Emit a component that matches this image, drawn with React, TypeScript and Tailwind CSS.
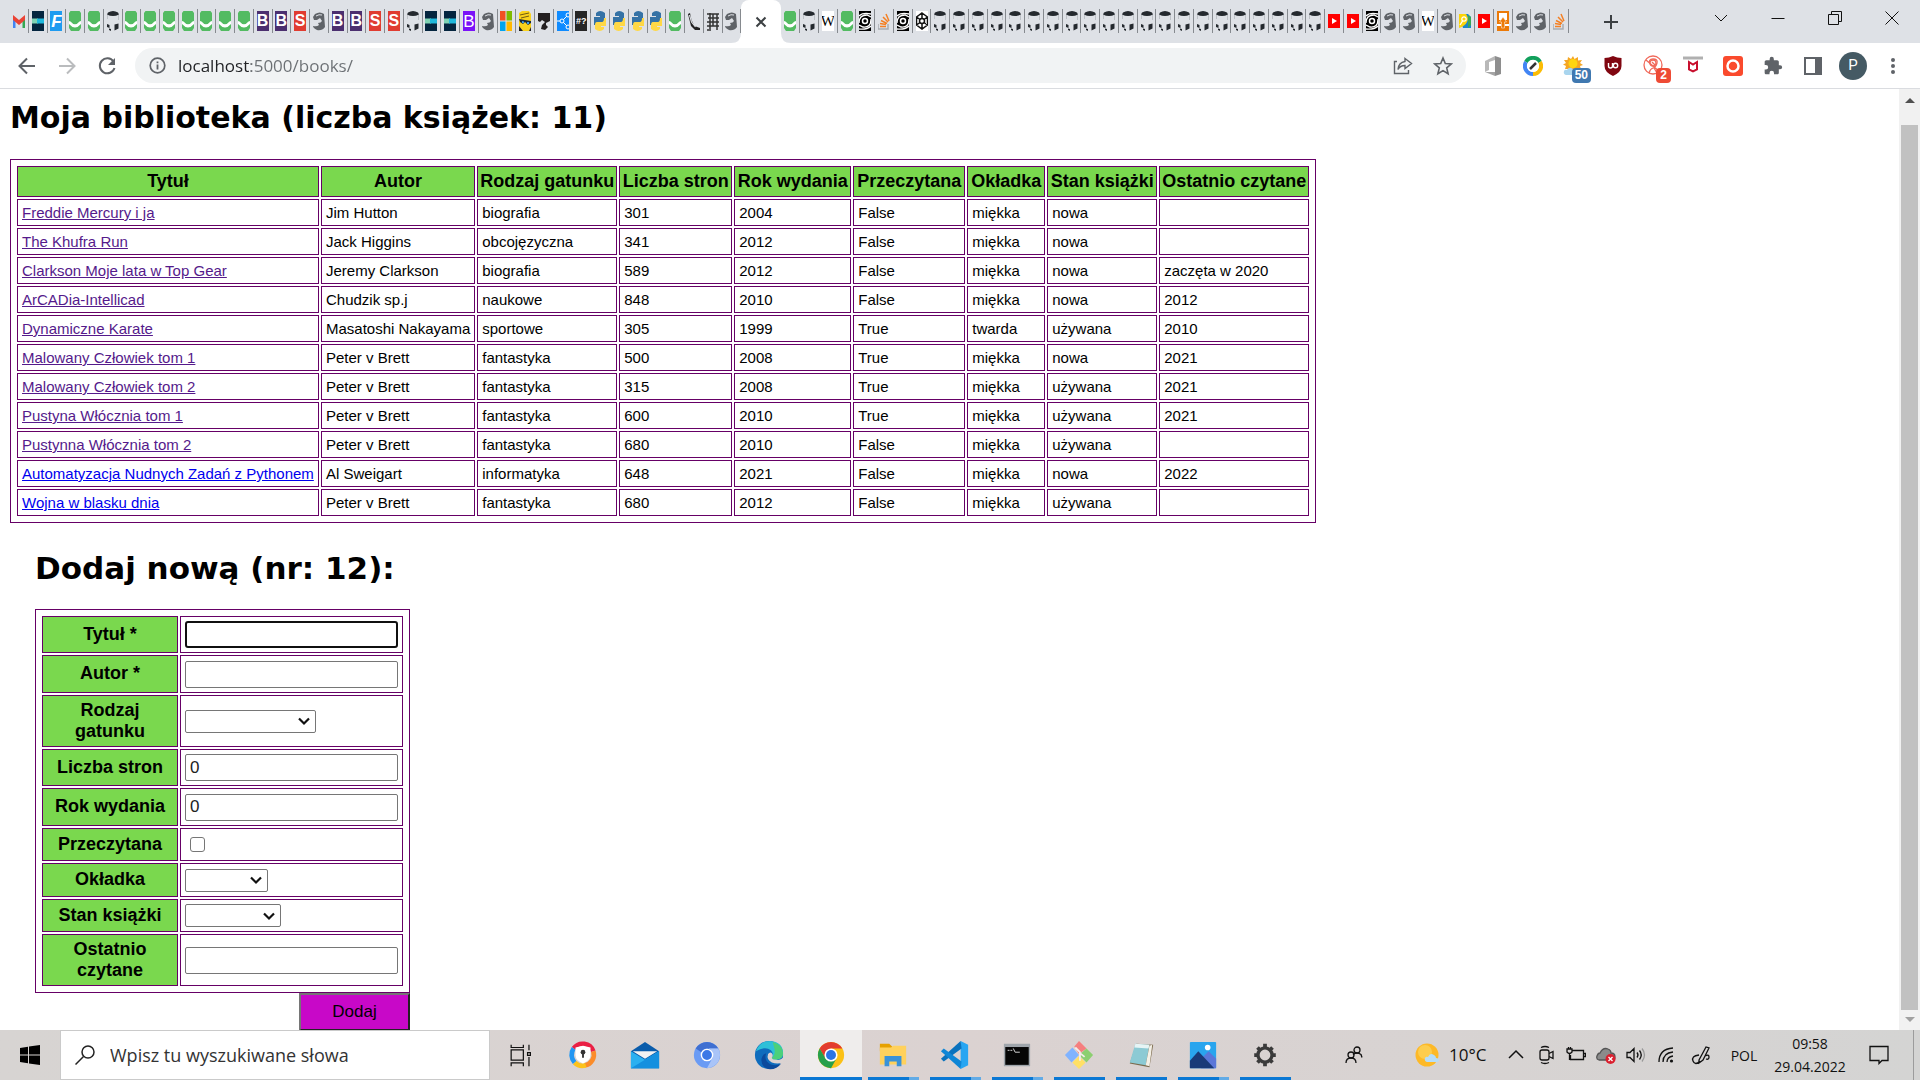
import React from "react";

type Fav =
  | "gmail" | "navy" | "f" | "green" | "gh" | "b" | "s" | "globe" | "bv" | "ms" | "face" | "blob"
  | "share" | "hash" | "py" | "line" | "grid" | "w" | "spiral" | "so" | "hex" | "yt" | "find" | "up";

const rep = (f: Fav, n: number): Fav[] => Array.from({ length: n }, () => f);

const LEFT: Fav[] = [
  "gmail", "navy", "f", "green", "green", "gh", ...rep("green", 7), "b", "b", "s", "globe", "b", "b", "s", "s",
  "gh", "navy", "navy", "bv", "globe", "ms", "face", "blob", "share", "hash", ...rep("py", 4), "green", "line",
  "grid", "globe",
];
const RIGHT: Fav[] = [
  "green", "gh", "w", "green", "spiral", "so", "spiral", "hex", ...rep("gh", 21), "yt", "yt", "spiral", "globe",
  "globe", "w", "globe", "find", "yt", "up", "globe", "globe", "so",
];

function Favicon({ kind }: { kind: Fav }) {
  const letter = "flex h-5 w-3 items-center justify-center overflow-hidden font-['Liberation_Sans'] leading-none text-white";
  switch (kind) {
    case "f":
      return <span className={`${letter} bg-[#1e9bf0] text-[17px] font-bold italic`}>F</span>;
    case "b":
      return <span className={`${letter} bg-[#4b2f6f] text-[16px] font-bold`}>B</span>;
    case "s":
      return <span className={`${letter} bg-[#e03c31] text-[16px] font-bold`}>S</span>;
    case "bv":
      return <span className={`${letter} bg-[#7a12f8] text-[17px]`}>B</span>;
    case "hash":
      return <span className={`${letter} bg-[#262626] text-[9px] font-bold`}>#?</span>;
    case "w":
      return (
        <span className="flex h-5 w-3 items-center justify-center overflow-hidden bg-white font-['Liberation_Serif'] text-[15px] leading-none text-black">
          W
        </span>
      );
  }
  return (
    <svg className="h-5 w-3" viewBox="0 0 12 20" fill="none">
      {kind === "gmail" && (
        <>
          <path d="M0 5v12h2.500V8z" fill="#4285f4" />
          <path d="M12 5v12H9.500V8z" fill="#34a853" />
          <path d="M0 4l6 5 6-5v5l-6 5-6-5z" fill="#ea4335" />
        </>
      )}
      {kind === "navy" && (
        <>
          <path d="M0 0h12v20H0z" fill="#04253f" />
          <path d="M0 7.500h6v5H0z" fill="#7fd3b4" />
          <path d="M5 7.500h7v5H5z" fill="#1fb8dc" />
        </>
      )}
      {kind === "green" && (
        <>
          <path d="M1.500 0h9L12 2v15l-2 3H2l-2-3V2z" fill="#53bb62" />
          <path d="M0 10l1.500.5Q6 16 10.500 10.500L12 10v3q-6 7-12 0z" fill="#fff" />
        </>
      )}
      {kind === "gh" && (
        <>
          <path d="M1 1.500Q6-1.500 11 1.500l1 2Q6 6.500 0 3.500z" fill="#24292e" />
          <path d="M.3 4v4M11.700 4v5" stroke="#a4a8ad" strokeWidth=".7" />
          <path d="M7.500 13.500l4-1v5l-4 2zM0 13l2.500 1v3L0 16zM2 17.500l2 .5v2l-2-1z" fill="#24292e" />
        </>
      )}
      {kind === "globe" && (
        <>
          <path d="M2 3Q7 0 11 3l1 13q-3 4-8 3Q0 17 0 15q4 1 6-1l-1-2q3 0 4-2L7 7 4 9H1L0 6z" fill="#5f6368" />
          <path d="M3 5q3-2 6-1" stroke="#dee1e6" />
        </>
      )}
      {kind === "ms" && (
        <>
          <path d="M0 0h5.500v9.500H0z" fill="#f25022" />
          <path d="M6.500 0H12v9.500H6.500z" fill="#7fba00" />
          <path d="M0 10.500h5.500V20H0z" fill="#00a4ef" />
          <path d="M6.500 10.500H12V20H6.500z" fill="#ffb900" />
        </>
      )}
      {kind === "face" && (
        <>
          <path d="M0 2l3-2h7l2 3v17H0z" fill="#f9d21c" />
          <path d="M1 4l9-2M2 7l8-2" stroke="#4a3b12" strokeWidth=".8" />
          <path d="M0 8l12 2v2l-3 2-3-3-2 2-3-2z" fill="#1b2a3c" />
          <path d="M3 10l2 .5v1.500L3 12zM8 11h2v2H8z" fill="#3da0e8" />
          <path d="M0 15l4 5H0zM12 16l-2 4h2z" fill="#222" />
        </>
      )}
      {kind === "blob" && <path d="M0 2h12v8l-4 2v2l2 2-3 3-4-1 1-4 3-3-3-2-2 2-2-1z" fill="#231f20" />}
      {kind === "share" && (
        <>
          <path d="M0 0h12v20H0z" fill="#0f8bff" />
          <path d="M0 10h5l5-5M5 10l5 5" stroke="#fff" />
          <circle cx="5" cy="10" r="2" fill="#0f8bff" stroke="#fff" />
          <circle cx="11" cy="4" r="2" stroke="#fff" />
          <circle cx="11" cy="16" r="2" stroke="#fff" />
        </>
      )}
      {kind === "py" && (
        <>
          <path d="M2 2q4-4 9 0v7q0 2-2 2H4q-2 0-2 3H0V6h6V5H2z" fill="#3572a5" />
          <path d="M10 18q-4 4-9 0v-4q0-3 2-3h5q2 0 2-4h2v8H7v1h3z" fill="#ffd845" />
        </>
      )}
      {kind === "line" && (
        <>
          <path d="M0 3l2-1 1.500 7 3 6 5.500 2v2H7l-4-4z" fill="#222" />
          <path d="M1.500 4l2 7 4 5" stroke="#dee1e6" strokeWidth="1.200" />
        </>
      )}
      {kind === "grid" && <path d="M0 3h12M1 7h11M0 11h12M0 15h12M3 2v16M6 3v12M10 3v16M0 19h4" stroke="#333" strokeWidth="1.500" />}
      {kind === "spiral" && (
        <>
          <path d="M0 0h12v20H0z" fill="#000" />
          <circle cx="6" cy="10" r="2.500" stroke="#fff" strokeWidth="1.500" />
          <path d="M0 12Q0 4 8 4l4 2M12 8q0 9-8 8l-4-2M0 5q4-4 12-2M12 15q-4 4-12 3" stroke="#fff" strokeWidth="1.300" />
        </>
      )}
      {kind === "so" && (
        <>
          <path d="M0 13v5h10v-5" stroke="#a9adb3" strokeWidth="1.500" />
          <path d="M2 15.500h6M2 12.500l6 1M3 9.500l6 3M5 6l5 5M8 3l3 7" stroke="#f48024" strokeWidth="1.500" />
        </>
      )}
      {kind === "hex" && (
        <>
          <path d="M0 0h12v20H0z" fill="#fff" />
          <path d="M6 2l5.500 4v8L6 18 .5 14V6zM6 2v5M.5 14L4 11.500M11.500 14L8 11.500M.5 6L4 8.500M11.500 6L8 8.500M6 13v5" stroke="#111" strokeWidth="1.500" />
          <circle cx="6" cy="10" r="2.500" stroke="#111" strokeWidth="1.500" />
        </>
      )}
      {kind === "yt" && (
        <>
          <path d="M0 3h12v14H0z" fill="#f00" />
          <path d="M4 7l5 3-5 3z" fill="#fff" />
        </>
      )}
      {kind === "find" && (
        <>
          <path d="M0 3h9l3 3v11H4z" fill="#1b86c8" />
          <path d="M0 3h7q3 4 1 8t-8 6z" fill="#fbd40a" />
          <path d="M9 4l3 2v8l-3 3z" fill="#3aa655" />
          <circle cx="5" cy="8" r="2.200" stroke="#fff" strokeWidth="1.200" />
          <path d="M3.500 10L1 14" stroke="#fff" strokeWidth="1.400" />
        </>
      )}
      {kind === "up" && (
        <>
          <path d="M0 0h12v20H0z" fill="#ec7a08" />
          <path d="M2 2h8v7H2zM0 13h4v2H0zM8 13h4v2H8z" fill="#fff" />
          <path d="M6 6l3.500 5H7.500v6h-3v-6h-2z" fill="#ec7a08" stroke="#fff" strokeWidth=".5" />
        </>
      )}
    </svg>
  );
}

function Tab({ kind }: { kind: Fav }) {
  return (
    <button aria-label={`Karta ${kind}`} className="flex h-6 min-w-0 flex-1 items-center justify-center overflow-hidden border-r border-[#868a8f]">
      <Favicon kind={kind} />
    </button>
  );
}

function WindowButton({ label, children }: { label: string; children: React.ReactNode }) {
  return (
    <button aria-label={label} className="flex h-9 w-[57px] items-center justify-center">
      <svg className="h-4 w-4" viewBox="0 0 16 16" fill="none" stroke="#111">{children}</svg>
    </button>
  );
}

function TabStrip() {
  return (
    <header className="flex h-[43px] shrink-0 items-start bg-[#dee1e6] pl-2.5">
      <div className="flex h-full max-w-[1559px] flex-1 items-start">
        <div className="flex flex-[39] pt-[9px]">{LEFT.map((k, i) => <Tab key={i} kind={k} />)}</div>
        <div className="relative flex h-full w-10 shrink-0 items-center justify-center rounded-t-lg bg-white">
          <svg className="absolute bottom-0 -left-2.5 h-2.5 w-2.5" viewBox="0 0 10 10"><path d="M10 0v10H0Q10 10 10 0z" fill="#fff" /></svg>
          <svg className="absolute -right-2.5 bottom-0 h-2.5 w-2.5" viewBox="0 0 10 10"><path d="M0 0v10h10Q0 10 0 0z" fill="#fff" /></svg>
          <button aria-label="Zamknij kartę">
            <svg className="h-3 w-3" viewBox="0 0 12 12" stroke="#3c4043" strokeWidth="2"><path d="M1.500 1.500l9 9M10.500 1.500l-9 9" /></svg>
          </button>
        </div>
        <div className="flex flex-[42] pt-[9px]">{RIGHT.map((k, i) => <Tab key={i} kind={k} />)}</div>
      </div>
      <button aria-label="Nowa karta" className="ml-7 flex h-[43px] w-7 items-center justify-center">
        <svg className="h-4 w-4" viewBox="0 0 16 16" stroke="#3c4043" strokeWidth="2"><path d="M8 1v14M1 8h14" /></svg>
      </button>
      <div className="ml-auto flex">
        <WindowButton label="Wyszukaj karty"><path d="M2 5l6 6 6-6" /></WindowButton>
        <WindowButton label="Minimalizuj"><path d="M1.500 8.500h13" /></WindowButton>
        <WindowButton label="Przywróć"><path d="M1.500 4.500h10v10h-10zM4.500 4.500v-3h10v10h-3" /></WindowButton>
        <WindowButton label="Zamknij"><path d="M1.500 1.500l13 13M14.500 1.500l-13 13" /></WindowButton>
      </div>
    </header>
  );
}

function Ext({ label, children }: { label: string; children: React.ReactNode }) {
  return <button aria-label={label} className="relative flex h-full w-10 items-center justify-center">{children}</button>;
}

function Toolbar() {
  return (
    <nav className="flex h-[46px] shrink-0 items-center border-b border-[#dadce0] bg-white px-[7px]">
      <button aria-label="Wstecz" className="flex w-10 justify-center">
        <svg className="h-5 w-5" viewBox="0 0 20 20" fill="none" stroke="#5f6368" strokeWidth="2"><path d="M18 10H3M10 2.500L2.500 10l7.500 7.500" /></svg>
      </button>
      <button aria-label="Dalej" className="flex w-10 justify-center">
        <svg className="h-5 w-5" viewBox="0 0 20 20" fill="none" stroke="#babcbe" strokeWidth="2"><path d="M2 10h15M10 2.500l7.500 7.500-7.500 7.500" /></svg>
      </button>
      <button aria-label="Odśwież" className="flex w-10 justify-center">
        <svg className="h-5 w-5" viewBox="0 0 20 20" fill="none"><path d="M16.500 5.500A7.500 7.500 0 1 0 17.500 12" stroke="#5f6368" strokeWidth="2" /><path d="M18 2v7h-7z" fill="#5f6368" /></svg>
      </button>
      <div className="ml-2 flex h-[35px] min-w-0 flex-1 items-center rounded-full bg-[#f1f3f4] pl-3.5">
        <svg className="h-[17px] w-[17px] shrink-0" viewBox="0 0 17 17" fill="none" stroke="#5f6368"><circle cx="8.500" cy="8.500" r="7.300" strokeWidth="1.700" /><path d="M8.500 7.500v5M8.500 4.500v1.700" strokeWidth="1.800" /></svg>
        <input
          type="text"
          aria-label="Adres"
          defaultValue="localhost:5000/books/"
          className="ml-3 min-w-0 flex-1 bg-[linear-gradient(90deg,#202124_73px,#6b6f73_73px)] bg-clip-text font-['Open_Sans','Noto_Sans',sans-serif] text-[17px] leading-6 text-transparent outline-none"
        />
        <button aria-label="Udostępnij" className="flex w-10 justify-center">
          <svg className="h-5 w-5" viewBox="0 0 20 20" fill="none" stroke="#5f6368" strokeWidth="1.400"><path d="M4 5.500H1.500v12h14V14M12 2.500l6.500 5-6.500 5v-3q-5 0-7 4 .5-7 7-8z" /></svg>
        </button>
        <button aria-label="Dodaj do zakładek" className="mr-[3px] flex w-10 justify-center">
          <svg className="h-5 w-5" viewBox="0 0 20 20" fill="none" stroke="#5f6368" strokeWidth="1.600"><path d="M10 2l2.300 5.500 5.900.5-4.500 3.900 1.400 5.800L10 14.600l-5.100 3.100 1.400-5.800L1.800 8l5.900-.5z" /></svg>
        </button>
      </div>
      <div className="ml-[7px] flex h-full">
        <Ext label="Office">
          <svg className="h-5 w-5" viewBox="0 0 20 20"><path d="M2 5l10-5v4L6 6v8l-4 2z" fill="#b8b8b8" /><path d="M12 0l6 2v16l-6 2z" fill="#8e8e8e" /><path d="M2 16l10 0v4z" fill="#a5a5a5" /></svg>
        </Ext>
        <Ext label="Edytor">
          <svg className="h-5 w-5" viewBox="0 0 20 20" fill="none" strokeWidth="4"><path d="M3 6a8 8 0 0 1 14 0" stroke="#12a05c" /><path d="M17 6a8 8 0 0 1-7 12" stroke="#fbbc05" /><path d="M10 18A8 8 0 0 1 3 6" stroke="#4285f4" /><circle cx="10" cy="10" r="6" fill="#fff" stroke="none" /><path d="M7 13l6-6" stroke="#333" strokeWidth="2.500" /></svg>
        </Ext>
        <Ext label="Pogoda">
          <svg className="h-5 w-5" viewBox="0 0 20 20"><path d="M10 0l1.500 3L15 1l0 3.500 4-.5-2 3 3 2-3 1 1 3-16 0 1-3-3-1.500L3 7 1 4l3.500 0L5 1l3 2z" fill="#f5a623" /><circle cx="10" cy="7.500" r="4.500" fill="#fdd510" /><path d="M3 19q-3-1-2-4 1-2 3-1 2-4 6-1v6z" fill="#a9d5ee" /></svg>
          <span className="absolute right-[2px] bottom-[5px] h-[15px] rounded-sm bg-[#3f78b0] px-[3px] font-['Liberation_Sans'] text-[12px] leading-[15px] font-bold text-white">50</span>
        </Ext>
        <Ext label="uBlock">
          <svg className="h-5 w-5" viewBox="0 0 20 20" fill="none"><path d="M10 0q4 2 8.500 2v8q0 6-8.500 10Q1.500 16 1.500 10V2Q6 2 10 0z" fill="#800610" /><path d="M5.500 7v3q0 2 2 2t2-2V7" stroke="#fff" strokeWidth="1.400" /><circle cx="12.500" cy="9.500" r="2.200" stroke="#fff" strokeWidth="1.400" /></svg>
        </Ext>
        <Ext label="Blokada">
          <svg className="h-[22px] w-[22px]" viewBox="0 0 22 22" fill="none" stroke="#f06a5b" strokeWidth="1.300"><circle cx="11" cy="10" r="9" /><path d="M8 9q-2-5 3-5t4 4-4 5-4 5M4 5l14 12M12 13l3 5M10 7l3 3" /><circle cx="11" cy="8" r="3" /></svg>
          <span className="absolute right-[2px] bottom-[5px] h-[15px] rounded-sm bg-[#ee4b35] px-1 font-['Liberation_Sans'] text-[12px] leading-[15px] font-bold text-white">2</span>
        </Ext>
        <Ext label="McAfee">
          <svg className="h-5 w-5" viewBox="0 0 20 20" fill="none"><path d="M0 2h20" stroke="#b0b0b0" strokeWidth="3" /><path d="M6 6l4 2.500L14 6v7.500L10 15.500 6 13.500z" stroke="#c8102e" strokeWidth="2" /></svg>
        </Ext>
        <Ext label="Nagrywanie">
          <svg className="h-5 w-5" viewBox="0 0 20 20" fill="none"><rect width="20" height="20" rx="3" fill="#fa4a2d" /><circle cx="10" cy="10" r="5.500" stroke="#fff" strokeWidth="2.500" /></svg>
        </Ext>
        <Ext label="Rozszerzenia">
          <svg className="h-5 w-5" viewBox="0 0 24 24" fill="#5f6368"><path d="M20.500 11H19V7c0-1.100-.9-2-2-2h-4V3.500a2.500 2.500 0 0 0-5 0V5H4c-1.100 0-2 .9-2 2v3.800h1.500a2.700 2.700 0 0 1 0 5.400H2V20c0 1.100.9 2 2 2h3.800v-1.500a2.700 2.700 0 0 1 5.400 0V22H17c1.100 0 2-.9 2-2v-4h1.500a2.500 2.500 0 0 0 0-5z" /></svg>
        </Ext>
        <Ext label="Panel boczny">
          <svg className="h-[18px] w-[18px]" viewBox="0 0 18 18"><path d="M1 1h16v16H1z" fill="none" stroke="#5f6368" strokeWidth="2" /><path d="M11 1h6v16h-6z" fill="#5f6368" /></svg>
        </Ext>
        <Ext label="Profil">
          <span className="flex h-7 w-7 items-center justify-center rounded-full bg-[#455a64] font-['Roboto'] text-[15px] text-white">P</span>
        </Ext>
        <Ext label="Menu">
          <svg className="h-5 w-5" viewBox="0 0 20 20" fill="#5f6368"><circle cx="10" cy="4" r="2" /><circle cx="10" cy="10" r="2" /><circle cx="10" cy="16" r="2" /></svg>
        </Ext>
      </div>
    </nav>
  );
}

const COLS: [string, string][] = [
  ["Tytuł", "w-[302px]"], ["Autor", "w-[154px]"], ["Rodzaj gatunku", "w-[140px]"], ["Liczba stron", "w-[113px]"],
  ["Rok wydania", "w-[117px]"], ["Przeczytana", "w-[112px]"], ["Okładka", "w-[78px]"], ["Stan książki", "w-[110px]"],
  ["Ostatnio czytane", "w-[150px]"],
];
const BOOKS = [
  ["Freddie Mercury i ja", "Jim Hutton", "biografia", "301", "2004", "False", "miękka", "nowa", ""],
  ["The Khufra Run", "Jack Higgins", "obcojęzyczna", "341", "2012", "False", "miękka", "nowa", ""],
  ["Clarkson Moje lata w Top Gear", "Jeremy Clarkson", "biografia", "589", "2012", "False", "miękka", "nowa", "zaczęta w 2020"],
  ["ArCADia-Intellicad", "Chudzik sp.j", "naukowe", "848", "2010", "False", "miękka", "nowa", "2012"],
  ["Dynamiczne Karate", "Masatoshi Nakayama", "sportowe", "305", "1999", "True", "twarda", "używana", "2010"],
  ["Malowany Człowiek tom 1", "Peter v Brett", "fantastyka", "500", "2008", "True", "miękka", "nowa", "2021"],
  ["Malowany Człowiek tom 2", "Peter v Brett", "fantastyka", "315", "2008", "True", "miękka", "używana", "2021"],
  ["Pustyna Włócznia tom 1", "Peter v Brett", "fantastyka", "600", "2010", "True", "miękka", "używana", "2021"],
  ["Pustynna Włócznia tom 2", "Peter v Brett", "fantastyka", "680", "2010", "False", "miękka", "używana", ""],
  ["Automatyzacja Nudnych Zadań z Pythonem", "Al Sweigart", "informatyka", "648", "2021", "False", "miękka", "nowa", "2022"],
  ["Wojna w blasku dnia", "Peter v Brett", "fantastyka", "680", "2012", "False", "miękka", "używana", ""],
];

function BookTable() {
  return (
    <table className="border-separate border-spacing-[2px] border border-[#660066] p-1 text-[15px] leading-[17px] whitespace-nowrap">
      <thead>
        <tr>
          {COLS.map(([name, width]) => (
            <th key={name} className={`h-[31px] border border-[#660066] bg-[#7ad84e] px-px text-center text-[18px] ${width}`}>{name}</th>
          ))}
        </tr>
      </thead>
      <tbody>
        {BOOKS.map((book, row) => (
          <tr key={book[0]}>
            {book.map((value, i) => (
              <td key={i} className="h-[27px] border border-[#660066] px-1">
                {i === 0 ? (
                  <a href="#" className={row < 9 ? "text-[#551a8b] underline" : "text-[#0000ee] underline"}>{value}</a>
                ) : value}
              </td>
            ))}
          </tr>
        ))}
      </tbody>
    </table>
  );
}

function Select({ id, size }: { id: string; size: string }) {
  return (
    <div className={`relative ${size}`}>
      <select id={id} className="block h-full w-full appearance-none rounded-[2px] border border-[#767676] bg-white"><option></option></select>
      <svg className="pointer-events-none absolute top-1/2 right-1.5 h-3 w-3 -translate-y-1/2" viewBox="0 0 12 12" fill="none" stroke="#111" strokeWidth="2.200"><path d="M1 3.500l5 5 5-5" /></svg>
    </div>
  );
}

const FIELD_BASE = "block h-[27px] w-[213px] bg-white px-1 text-[17px] text-[#222] outline-none";
const FIELD = `${FIELD_BASE} rounded-[2px] border border-[#767676]`;
const FIELD_FOCUSED = `${FIELD_BASE} rounded-[3px] border-2 border-[#101010]`;

const FIELDS: { id: string; label: string; row: string; control: React.ReactNode }[] = [
  { id: "title", label: "Tytuł *", row: "h-[37px]", control: <input id="title" type="text" className={FIELD_FOCUSED} /> },
  { id: "author", label: "Autor *", row: "h-[38px]", control: <input id="author" type="text" className={FIELD} /> },
  { id: "genre", label: "Rodzaj gatunku", row: "h-[52px]", control: <Select id="genre" size="h-[23px] w-[131px]" /> },
  { id: "pages", label: "Liczba stron", row: "h-[37px]", control: <input id="pages" type="text" defaultValue="0" className={FIELD} /> },
  { id: "year", label: "Rok wydania", row: "h-[38px]", control: <input id="year" type="text" defaultValue="0" className={FIELD} /> },
  { id: "read", label: "Przeczytana", row: "h-[33px]", control: <input id="read" type="checkbox" className="ml-[5px] block h-[15px] w-[15px] appearance-none rounded-[3px] border border-[#767676] bg-white" /> },
  { id: "cover", label: "Okładka", row: "h-[34px]", control: <Select id="cover" size="h-[23px] w-[83px]" /> },
  { id: "state", label: "Stan książki", row: "h-[33px]", control: <Select id="state" size="h-[23px] w-[96px]" /> },
  { id: "last", label: "Ostatnio czytane", row: "h-[52px]", control: <input id="last" type="text" className={FIELD} /> },
];

function BookForm() {
  return (
    <form className="ml-[25px] w-[375px]">
      <table className="w-full border-separate border-spacing-[2px] border border-[#660066] p-1">
        <tbody>
          {FIELDS.map((f) => (
            <tr key={f.id} className={f.row}>
              <th className="w-[136px] border border-[#660066] bg-[#7ad84e] p-0 pb-px text-center text-[18px] leading-[21px]">
                <label htmlFor={f.id}>
                  {f.row === "h-[52px]" ? f.label.split(" ").map((w) => <span key={w} className="block">{w}</span>) : f.label}
                </label>
              </th>
              <td className="border border-[#660066] px-1 py-0">{f.control}</td>
            </tr>
          ))}
        </tbody>
      </table>
      <button type="button" className="ml-auto block h-[38px] w-[111px] border-2 border-t-[#767676] border-r-[#222222] border-b-[#222222] border-l-[#767676] bg-[#c808c8] text-[17px]">Dodaj</button>
    </form>
  );
}

function Page() {
  return (
    <div className="flex min-h-0 flex-1">
      <main className="min-w-0 flex-1 overflow-hidden pl-2.5 font-['Liberation_Sans',Arial,sans-serif] text-black">
        <h1 className="pt-[11px] pb-[23px] font-['DejaVu_Sans',Verdana,sans-serif] text-[30px] leading-9 font-bold">Moja biblioteka (liczba książek: 11)</h1>
        <BookTable />
        <h2 className="ml-[25px] pt-[27px] pb-[23px] font-['DejaVu_Sans',Verdana,sans-serif] text-[31px] leading-9 font-bold">Dodaj nową (nr: 12):</h2>
        <BookForm />
      </main>
      <div className="flex w-[21px] flex-col items-center bg-[#f1f1f1]">
        <svg className="h-9 w-2.5" viewBox="0 0 10 36"><path d="M0 14l5-5 5 5z" fill="#505050" /></svg>
        <div className="w-[17px] flex-1 bg-[#c1c1c1]" />
        <svg className="h-5 w-2.5" viewBox="0 0 10 20"><path d="M0 7l5 5 5-5z" fill="#a0a0a0" /></svg>
      </div>
    </div>
  );
}

const TASKS: { name: string; open: "none" | "one" | "many" | "active"; art: React.ReactNode }[] = [
  { name: "Widok zadań", open: "none", art: <path d="M5.500 10.500h13v11h-13zM5.500 5v3h13V5M5.500 28v-3.500h13V28M24.500 5v6M24.500 18v10M23 13.500h3v3h-3z" fill="none" stroke="#111" strokeWidth="1.300" /> },
  { name: "Bezpieczna przeglądarka", open: "none", art: (
    <g fill="none" strokeWidth="5"><path d="M6 9a12 12 0 0 1 21 3" stroke="#ea1f44" /><path d="M27 12a11.500 11.500 0 0 1-9 15" stroke="#fb8c2a" /><path d="M19 27A12 12 0 0 1 7 24" stroke="#fcc21b" /><path d="M7 24A12 12 0 0 1 6 9" stroke="#2196f3" /><path d="M8 8l8-2 8 2v8q0 6-8 9-8-3-8-9z" fill="#fff" stroke="none" /><circle cx="16" cy="13" r="2.500" fill="#333" stroke="none" /><path d="M15 14h2v5h-2z" fill="#333" stroke="none" /></g>) },
  { name: "Poczta", open: "none", art: (
    <g><path d="M1 12L16 2l15 10v18H1z" fill="#0a5cab" /><path d="M1 12l15 9 15-9v18H1z" fill="#2bb0f0" /><path d="M3 12h26L16 20z" fill="#f2f2f2" /><path d="M1 30l30-18v18z" fill="#1490df" /></g>) },
  { name: "Chromium", open: "none", art: (
    <g><circle cx="16" cy="16" r="14" fill="#6a9bf4" /><path d="M4 9a14 14 0 0 1 24 0H16a7 7 0 0 0-6 4z" fill="#3f6fd1" /><path d="M28 9a14 14 0 0 1-12 21l6-11q2-6-4-10z" fill="#a9c4f8" /><circle cx="16" cy="16" r="6" fill="#3c78e6" stroke="#fff" strokeWidth="1.500" /></g>) },
  { name: "Edge", open: "none", art: (
    <g><circle cx="16" cy="16" r="15" fill="#0f6cbd" /><path d="M2 12Q6 1 17 1q14 1 14 13 0 6-7 7-5 0-5-2 3-4-1-8-6-5-16 1z" fill="#2ec0d8" /><path d="M20 2q11 3 11 12 0 6-7 7-5 0-5-2 4-3 3-9z" fill="#4bd07a" /><path d="M13 14q-3 8 5 12 6 2 11-1-5 7-14 6-8-3-7-11 1-5 5-6z" fill="#0b4a9c" /><path d="M15 15q-2 6 4 9 6 2 12 0v-5q-3 3-7 2-5 0-5-2 2-3 0-5-2-2-4 1z" fill="#dcd3d2" /></g>) },
  { name: "Chrome", open: "active", art: (
    <g><circle cx="16" cy="16" r="14" fill="#fbc116" /><path d="M3.900 9A14 14 0 0 1 28.100 9H16l-6 11z" fill="#e33b2e" /><path d="M3.900 9A14 14 0 0 0 16 30l6-10.500-6 3.500-6-3.500z" fill="#27a04b" /><circle cx="16" cy="16" r="7" fill="#fff" /><circle cx="16" cy="16" r="5.300" fill="#2b74e4" /></g>) },
  { name: "Eksplorator", open: "many", art: (
    <g><path d="M2 4h10l3 3v5H2z" fill="#e6a100" /><path d="M2 8h12l2-2h14v20H2z" fill="#ffd15c" /><path d="M7 17h18v11h-5v-5h-8v5H7z" fill="#3a92d8" /></g>) },
  { name: "VS Code", open: "many", art: (
    <g><path d="M22 1l8 4v22l-8 4z" fill="#27a5f2" /><path d="M22 1L1 20l3 3L23 9z" fill="#0a72bd" /><path d="M22 31L1 12l3-3 19 14z" fill="#0f86d6" /></g>) },
  { name: "Wiersz polecenia", open: "many", art: (
    <g><path d="M2 4h28v24H2z" fill="#9fa5ab" /><path d="M3.500 7.500h25v19h-25z" fill="#050505" /><path d="M6 11h2M9 11h2M12 9l2 4M14 13h5" stroke="#ddd" /></g>) },
  { name: "Git Bash", open: "one", art: (
    <g><path d="M16 1l8 8-8 6-5-8z" fill="#f57f7f" /><path d="M9 8l7 8-8 8-7-8z" fill="#80b3ff" /><path d="M24 9l7 7-7 8-8-8z" fill="#8ccf70" /><path d="M16 17l7 7-7 7-7-7z" fill="#ffe066" /><path d="M12 8l5 5v9M17 14l5 4" stroke="#f3ece9" strokeWidth="2" fill="none" /></g>) },
  { name: "Notatnik", open: "one", art: (
    <g><path d="M11 4l18 1-4 24-21-4z" fill="#7a6a4c" /><path d="M10 4l15 1-4 22-17-3z" fill="#8ccad4" /><path d="M10 4l15 1-1 4-15-1z" fill="#e6f4f5" /><path d="M25 6l3-1-3 23-4-1z" fill="#f4f0e6" /></g>) },
  { name: "Zdjęcia", open: "many", art: (
    <g><rect x="2" y="2" width="28" height="28" rx="1" fill="#29a5ee" /><path d="M14 20l8-8 8 8v10H14z" fill="#5a77d9" /><path d="M2 22l9-10 17 18H2z" fill="#193a78" /><circle cx="21" cy="8" r="3" fill="#fff" /></g>) },
  { name: "Ustawienia", open: "one", art: (
    <g fill="none" stroke="#3b3b3b"><circle cx="16" cy="16" r="7.500" strokeWidth="3.500" /><path d="M16 4v4M16 24v4M4.500 16h4M23.500 16h4M8 8l3 3M21 21l3 3M24 8l-3 3M11 21l-3 3" strokeWidth="4" /></g>) },
];

function TrayIcon({ label, className = "w-[30px]", children }: { label: string; className?: string; children: React.ReactNode }) {
  return (
    <button aria-label={label} className={`flex h-full shrink-0 items-center justify-center ${className}`}>
      <svg className="h-5 w-5" viewBox="0 0 20 20" fill="none" stroke="#111" strokeWidth="1.300">{children}</svg>
    </button>
  );
}

function Taskbar() {
  return (
    <footer className="flex h-[50px] shrink-0 items-stretch bg-gradient-to-r from-[#d7d4d2] via-[#dbd2d1] to-[#d4d4d3] font-['Open_Sans','Noto_Sans',sans-serif] text-[#111]">
      <button aria-label="Start" className="flex w-[60px] shrink-0 items-center justify-center">
        <svg className="h-5 w-5" viewBox="0 0 20 20"><path d="M0 3l8-1.200v7.700H0zM9 1.600L20 0v9.500H9zM0 10.500h8v7.700L0 17zM9 10.500h11V20L9 18.400z" /></svg>
      </button>
      <label className="flex w-[430px] items-center border border-[#cacaca] bg-white pl-3.5">
        <svg className="h-5 w-5 shrink-0" viewBox="0 0 20 20" fill="none" stroke="#222" strokeWidth="1.500"><circle cx="13" cy="7" r="6" /><path d="M8.500 11.500L0.500 19.500" /></svg>
        <input type="text" aria-label="Szukaj" placeholder="Wpisz tu wyszukiwane słowa" className="ml-[15px] min-w-0 flex-1 bg-transparent text-[18px] outline-none placeholder:text-[#333]" />
      </label>
      <div className="flex">
        {TASKS.map((t) => (
          <button key={t.name} aria-label={t.name} className={t.open === "active" ? "flex w-[62px] flex-col items-center bg-[#efedec]" : "flex w-[62px] flex-col items-center"}>
            <span className="flex flex-1 items-center pt-[3px]"><svg className="h-[30px] w-[30px]" viewBox="0 0 32 32">{t.art}</svg></span>
            {t.open === "none" && <span className="h-[3px]" />}
            {t.open === "one" && <span className="h-[3px] w-[51px] bg-[#0a78d4]" />}
            {t.open === "many" && <span className="flex h-[3px] w-[51px] bg-[#62abe6]"><span className="w-[41px] bg-[#0a78d4]" /></span>}
            {t.open === "active" && <span className="h-[3px] w-full bg-[#0a78d4]" />}
          </button>
        ))}
      </div>
      <div className="ml-auto flex items-center">
        <TrayIcon label="Kontakty" className="mr-[46px] w-[30px]"><circle cx="13" cy="5" r="3" /><circle cx="7" cy="10" r="3" /><path d="M2 18q0-5 5-5t5 5M9 9.500q4-3 8 0l1 3" /></TrayIcon>
        <button className="flex items-center text-[17px]">
          <svg className="mr-2.5 h-6 w-6" viewBox="0 0 24 24"><circle cx="12" cy="12" r="11.500" fill="#fdb927" /><circle cx="10" cy="9" r="7" fill="#fdcd4d" /><path d="M12 19q-3-1-2-4 1-2 3-1 2-5 6-2 2 1 2 3 3 0 3 3l-2 1z" fill="#b5ddf8" /></svg>
          <span className="w-[52px] text-left">10°C</span>
        </button>
        <TrayIcon label="Pokaż ukryte ikony"><path d="M3 13l7-7 7 7" strokeWidth="1.500" /></TrayIcon>
        <TrayIcon label="Kamera"><rect x="4" y="5" width="9" height="10" rx="2" /><path d="M13 8.500l4-2v7l-4-2M5 2.500q4-2 8 0M5 17.500q4 2 8 0" /></TrayIcon>
        <TrayIcon label="Bateria"><path d="M6 5.500h11.500v9H4.500V10M17.500 8.500h2v3h-2M1 4h5v3q-2.500 3-5 0zM2.500 4V2M4.500 4V2M3.500 9v6" /></TrayIcon>
        <TrayIcon label="Dysk"><path d="M3 15q-3-1-2-4t3-3q3-6 8-4 3 1 3 4 4 0 4 4t-3 3z" fill="#8b8b8b" stroke="#555" /><circle cx="14.500" cy="14" r="5" fill="#da1f2e" stroke="none" /><path d="M12.500 12l4 4M16.500 12l-4 4" stroke="#fff" /></TrayIcon>
        <TrayIcon label="Głośność"><path d="M1 7.500h3l4-4v13l-4-4H1zM11 7.500q2 2.500 0 5M13.500 5.500q3.500 4.500 0 9" /><path d="M16 3.500q5 6.500 0 13" stroke="#999" /></TrayIcon>
        <TrayIcon label="Sieć"><path d="M3 17Q3 4 17 3M7 17q0-9 10-10M11 17q0-5 6-6" /><circle cx="15.500" cy="16" r="1.600" fill="#111" stroke="none" /></TrayIcon>
        <TrayIcon label="Pióro" className="w-[39px]"><path d="M8 15L15 2l3 1-6 12-4 3zM8 10q-8 1-6 6t7 0M14 11q4-2 4 1t-3 2" /></TrayIcon>
        <button className="w-[48px] text-center text-[14px]">POL</button>
        <button className="w-[84px] text-center text-[14px] leading-[23px]">09:58<br />29.04.2022</button>
        <TrayIcon label="Powiadomienia" className="w-[53px]"><path d="M1 1.500h18v14h-6l-3 3v-3H1z" /></TrayIcon>
        <span className="mr-1.5 ml-2 h-full w-px bg-[#9c9c9c]" />
      </div>
    </footer>
  );
}

export default function App() {
  return (
    <div className="flex h-screen flex-col overflow-hidden bg-white">
      <TabStrip />
      <Toolbar />
      <Page />
      <Taskbar />
    </div>
  );
}
